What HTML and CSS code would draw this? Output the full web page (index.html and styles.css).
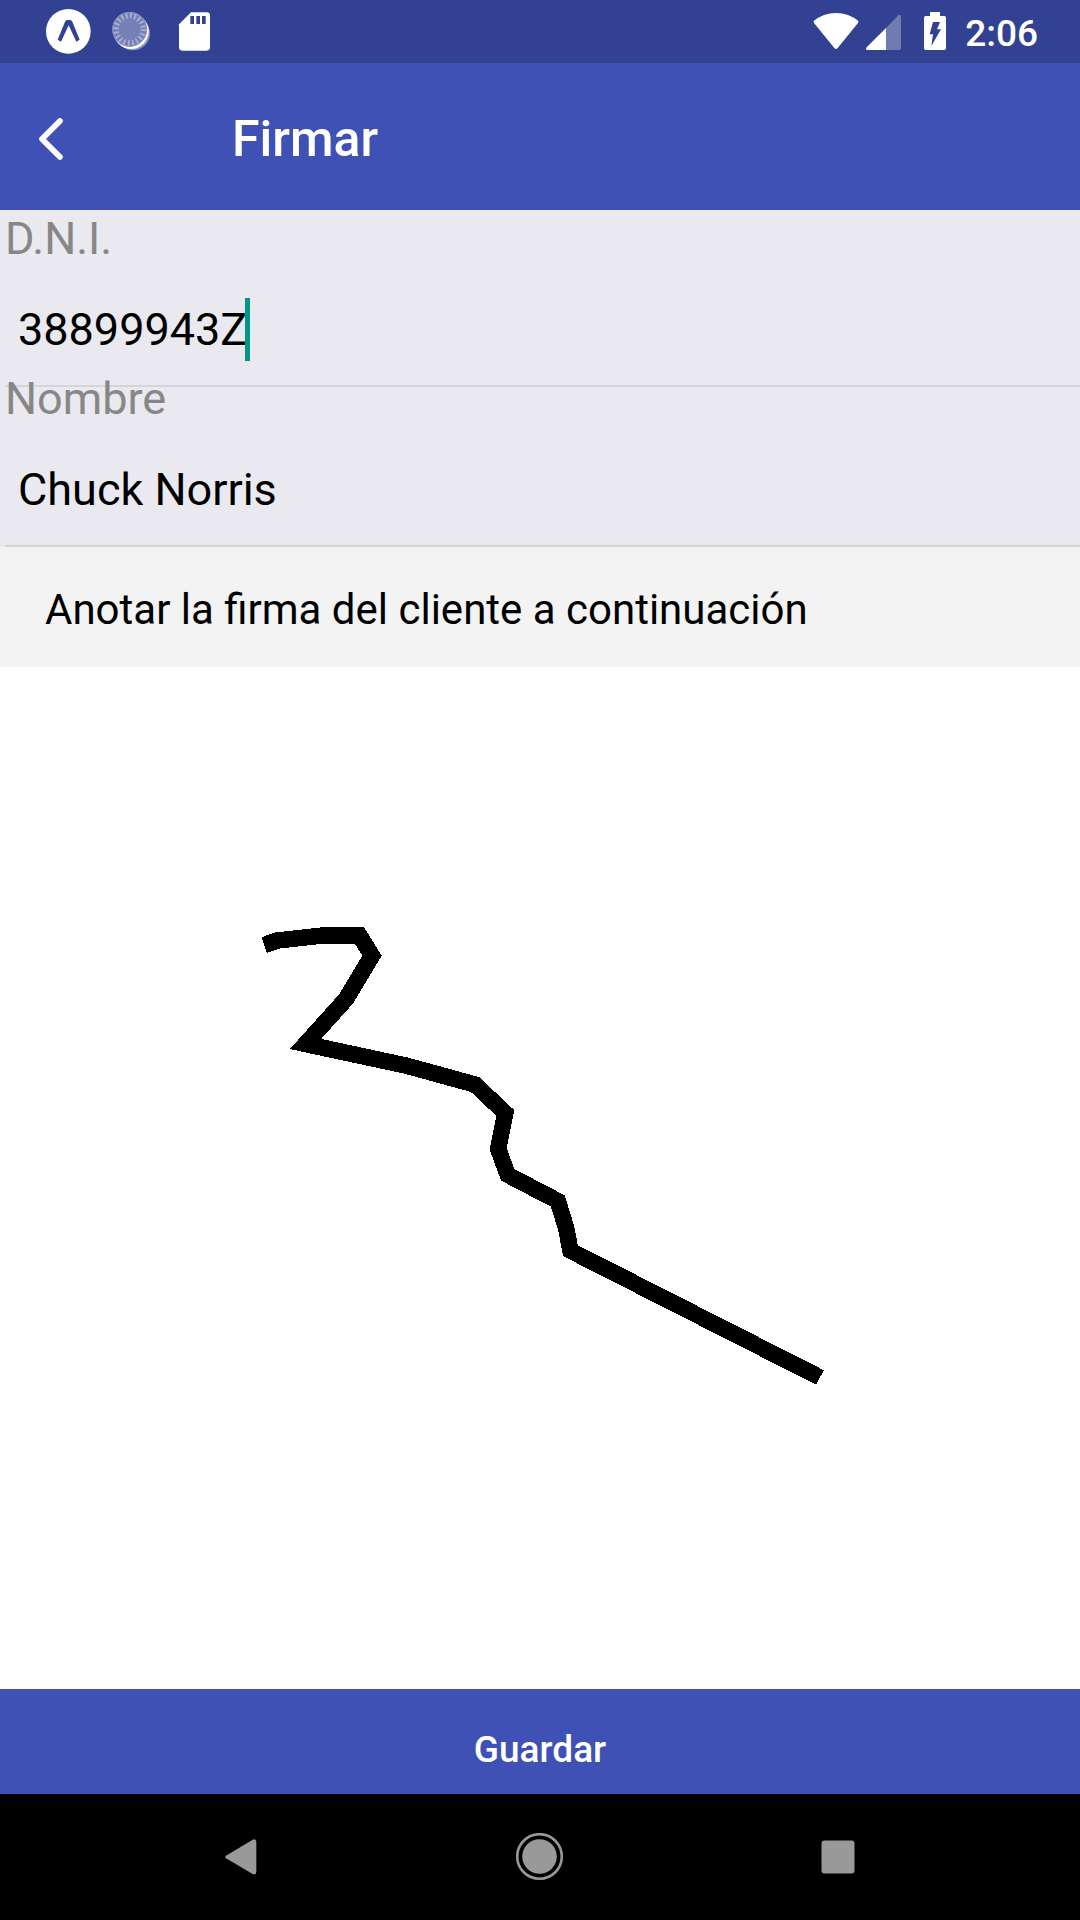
FILE: index.html
```html
<!DOCTYPE html>
<html lang="es">
<head>
<meta charset="utf-8">
<meta name="viewport" content="width=device-width, initial-scale=1">
<title>Firmar</title>
<link rel="stylesheet" href="styles.css">
</head>
<body>
<div class="status-bar">
  <div class="status-left">
    <svg class="status-icon" width="45" height="63" viewBox="138 0 135 189" aria-hidden="true">
      <circle cx="205" cy="94" r="67" fill="#fff"/>
      <path d="M173 119 L195 65 Q197 60 202 60 H210 Q215 60 217 65 L239 119 L229 125 L206 76 L183 125 Z" fill="#334192"/>
    </svg>
    <svg class="status-icon" width="45" height="63" viewBox="336 0 135 189" aria-hidden="true">
      <circle cx="399" cy="100" r="51" fill="#8b94c3"/>
      <circle cx="393" cy="94" r="53" fill="#fff"/>
      <circle cx="389" cy="88" r="52" fill="#7680b6"/>
      <circle cx="389" cy="88" r="41" fill="none" stroke="#adb3d3" stroke-width="17" stroke-dasharray="5 7.88"/>
      <circle cx="389" cy="88" r="51" fill="none" stroke="#8b94c3" stroke-width="3"/>
    </svg>
    <svg class="status-icon" width="45" height="63" viewBox="534 0 135 189" aria-hidden="true">
      <path d="M573 37 H620 Q630 37 630 47 V142 Q630 152 620 152 H547 Q537 152 537 142 V73 Z" fill="#fff"/>
      <path d="M571 48h11v24h-11z M589 48h11v24h-11z M606 48h11v24h-11z" fill="#334192"/>
    </svg>
  </div>
  <div class="status-right">
    <svg class="status-icon" width="46" height="63" viewBox="96 0 138 189" aria-hidden="true">
      <path d="M98 63 Q127 39 165 39 Q203 39 232 63 Q233 65 231 69 L170 144 Q165 150 160 144 L99 69 Q97 65 98 63Z" fill="#fff"/>
    </svg>
    <svg class="status-icon" width="35" height="63" viewBox="255 0 105 189" aria-hidden="true">
      <path d="M315 84 L352 46 Q360 41 360 50 V145 Q360 150 355 150 H315 Z" fill="#707ab3"/>
      <path d="M315 84 V150 H259 Q252 149 257 142 Z" fill="#fff"/>
    </svg>
    <svg class="status-icon" width="50" height="63" viewBox="381 0 150 189" aria-hidden="true">
      <path d="M447 36 H477 V48 H490 Q495 48 495 53 V145 Q495 150 490 150 H434 Q429 150 429 145 V53 Q429 48 434 48 H447 Z" fill="#fff"/>
      <path d="M456 66 H477 L468 88 H480 L451 138 L456 103 H446 Z" fill="#334192"/>
    </svg>
    <time class="clock">2:06</time>
  </div>
</div>

<header class="app-bar">
  <button class="back" type="button" aria-label="Volver">
    <svg width="26" height="44" viewBox="0 0 78 132" aria-hidden="true">
      <path d="M66 12 L12 66 L66 120" fill="none" stroke="#fff" stroke-width="17" stroke-linecap="round" stroke-linejoin="round"/>
    </svg>
  </button>
  <h1 class="title">Firmar</h1>
</header>

<form class="sign-form">
  <div class="fields">
    <div class="field">
      <label class="field-label" for="dni">D.N.I.</label>
      <div class="field-row">
        <input class="field-input field-input-active" id="dni" type="text" value="38899943Z">
        <span class="caret" aria-hidden="true"></span>
      </div>
    </div>
    <div class="field">
      <label class="field-label" for="nombre">Nombre</label>
      <div class="field-row">
        <input class="field-input" id="nombre" type="text" value="Chuck Norris">
      </div>
    </div>
  </div>
  <p class="note">Anotar la firma del cliente a continuación</p>
  <div class="pad">
    <svg class="signature" width="1080" height="1022" viewBox="0 0 1080 1022" role="img" aria-label="Firma">
      <polyline points="264.2,278 277.5,273.5 323,268.5 359.5,268.5 372,288.7 346,332 305.5,377 405.7,398.5 475,417.5 505.3,446 498.2,482 507.7,507.8 557.8,534 566,560.5 570.5,583.7 820,710.5" fill="none" stroke="#000" stroke-width="16.5" stroke-miterlimit="10"/>
    </svg>
  </div>
  <button class="save" type="submit">Guardar</button>
</form>

<nav class="nav-bar">
  <button class="nav-button" type="button" aria-label="Atrás">
    <svg width="34" height="36" viewBox="0 0 102 108" aria-hidden="true">
      <path d="M3 50 L83 2 Q94 -2 94 9 V98 Q94 109 83 105 L3 58 Q-2 54 3 50 Z" fill="#999"/>
    </svg>
  </button>
  <button class="nav-button" type="button" aria-label="Inicio">
    <svg width="48" height="48" viewBox="0 0 48 48" aria-hidden="true">
      <circle cx="23.5" cy="23.5" r="22.3" fill="none" stroke="#999" stroke-width="2.6"/>
      <circle cx="23.5" cy="23.5" r="17.3" fill="#999"/>
    </svg>
  </button>
  <button class="nav-button" type="button" aria-label="Recientes">
    <svg width="34" height="34" viewBox="0 0 34 34" aria-hidden="true">
      <rect x="0.5" y="0.5" width="33" height="33" rx="3" fill="#999"/>
    </svg>
  </button>
</nav>
</body>
</html>
```

FILE: styles.css
```css
* {
  box-sizing: border-box;
}

body {
  margin: 0;
  min-height: 100vh;
  display: flex;
  flex-direction: column;
  background: #fff;
  color: #000;
  font-family: Roboto, "Liberation Sans", sans-serif;
}

button {
  margin: 0;
  padding: 0;
  border: 0;
  background: none;
  color: inherit;
  font: inherit;
  cursor: pointer;
}

svg {
  display: block;
  flex: none;
}

.status-bar {
  display: flex;
  justify-content: space-between;
  height: 63px;
  padding: 0 42px 0 46px;
  background: #334192;
  color: #fff;
}

.status-left,
.status-right {
  display: flex;
  align-items: center;
}

.status-left {
  gap: 21px;
}

.status-right {
  gap: 7px;
}

.clock {
  padding-top: 4px;
  font-size: 37px;
  font-weight: 500;
  line-height: 44px;
}

.app-bar {
  display: flex;
  align-items: center;
  height: 147px;
  padding: 5px 38px 0;
  background: #3f51b5;
  color: #fff;
}

.back {
  display: flex;
  align-items: center;
  width: 194px;
  height: 100px;
}

.title {
  margin: 0;
  font-size: 50px;
  font-weight: 500;
  line-height: 58px;
}

.sign-form {
  flex: 1;
  display: flex;
  flex-direction: column;
}

.fields {
  padding: 17px 0 0 5px;
  background: #e9e9ef;
}

.field {
  display: flex;
  flex-direction: column;
  height: 160px;
  border-bottom: 2px solid #d5d4da;
}

.field-label {
  margin-top: -15px;
  color: #878787;
  font-size: 45px;
  line-height: 53px;
}

.field-row {
  flex: 1;
  display: flex;
  align-items: center;
  padding: 8px 13px 0;
}

.field-input {
  flex: 1;
  min-width: 0;
  height: 63px;
  padding: 0;
  border: 0;
  outline: 0;
  background: none;
  color: #000;
  font: inherit;
  font-size: 45px;
}

.field-input-active {
  flex: none;
  width: 227px;
}

.caret {
  width: 5px;
  height: 63px;
  background: #009688;
}

.note {
  margin: 0;
  padding: 38px 45px 32px;
  background: #f3f3f3;
  font-size: 42px;
  line-height: 50px;
}

.pad {
  flex: 1;
  overflow: hidden;
}

.signature {
  shape-rendering: crispEdges;
}

.save {
  height: 105px;
  padding-top: 15px;
  background: #3f51b5;
  color: #fff;
  font-size: 37px;
  font-weight: 500;
}

.nav-bar {
  display: grid;
  grid-template-columns: repeat(3, 1fr);
  height: 126px;
  padding: 0 93px;
  background: #000;
}

.nav-button {
  display: flex;
  align-items: center;
  justify-content: center;
}
```
